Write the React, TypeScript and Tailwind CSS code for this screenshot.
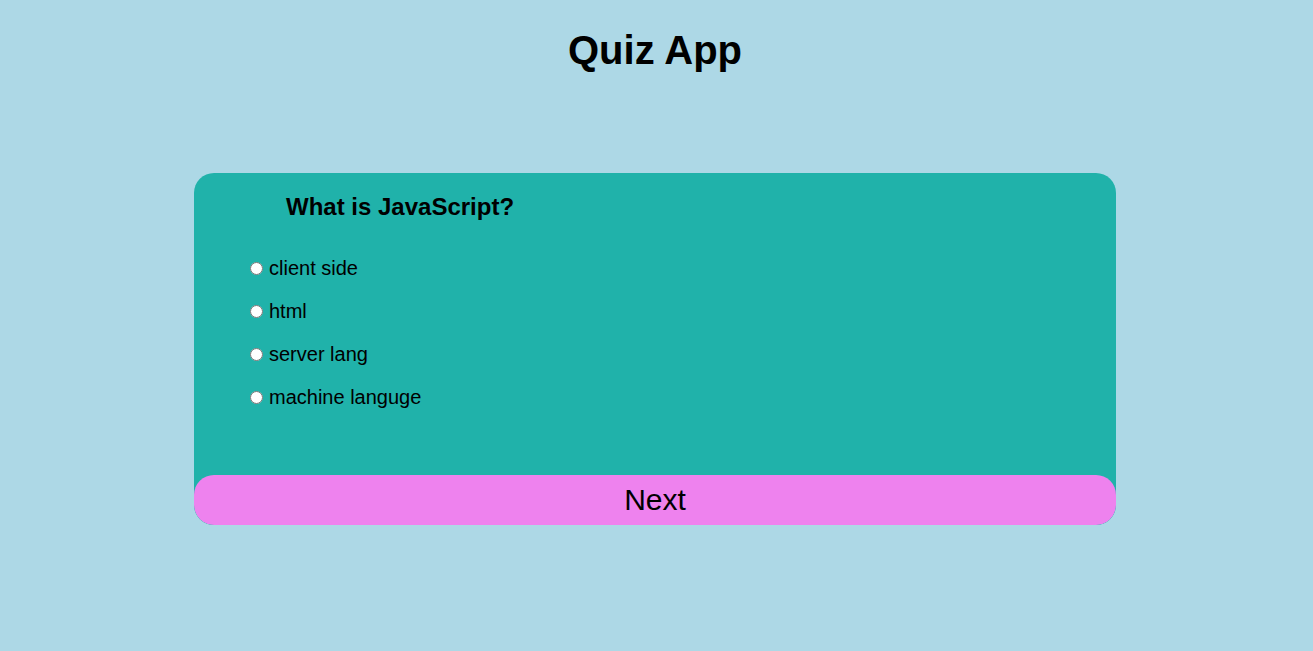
import { useState } from "react";

const options = ["client side", "html", "server lang", "machine languge"];

export default function App() {
  const [picked, setPicked] = useState<string | null>(null);

  return (
    <div className="min-h-screen bg-[#add8e6] pr-[3px] font-['Liberation_Sans',Arial,sans-serif] text-black">
      <h1 className="pt-[27px] text-center text-[40px] font-bold leading-[46px]">Quiz App</h1>

      <div className="mx-auto mt-[100px] w-[922px] overflow-hidden rounded-[20px] bg-[#20b2aa]">
        <div className="h-[302px] pt-[20px]">
          <h2 className="pl-[92px] text-[24px] font-bold leading-[28px]">What is JavaScript?</h2>
          <ul className="mt-[36px] flex flex-col gap-[20px] pl-[56px]">
            {options.map((opt) => (
              <li key={opt} className="flex items-center gap-[6px] text-[20px] leading-[23px]">
                <input
                  type="radio"
                  name="answer"
                  id={opt}
                  checked={picked === opt}
                  onChange={() => setPicked(opt)}
                  className="m-0 h-[13px] w-[13px]"
                />
                <label htmlFor={opt}>{opt}</label>
              </li>
            ))}
          </ul>
        </div>
        <button className="block h-[50px] w-full rounded-[20px] bg-[#ee82ee] text-[30px] leading-[50px]">
          Next
        </button>
      </div>
    </div>
  );
}
